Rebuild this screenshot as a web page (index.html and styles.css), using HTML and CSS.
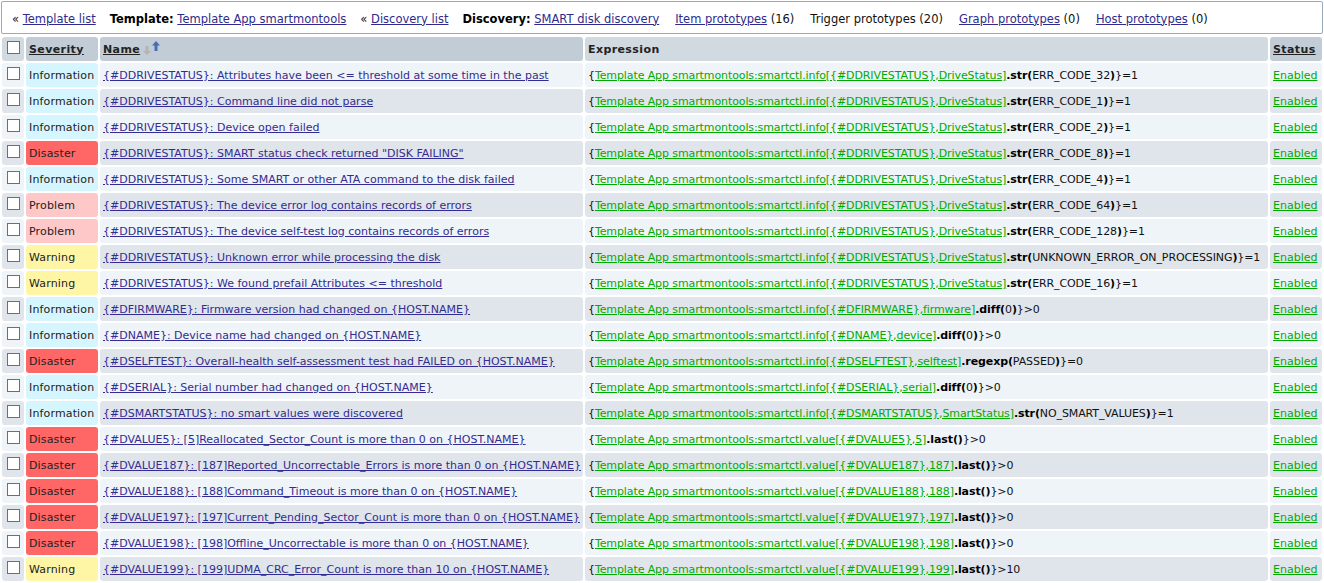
FILE: index.html
```html
<!DOCTYPE html>
<html>
<head>
<meta charset="utf-8">
<link rel="stylesheet" href="styles.css">
</head>
<body>
<div class="crumbs">
  <span class="crumb">« <a href="#">Template list</a></span>
  <span class="crumb"><b>Template:</b> <a href="#">Template App smartmontools</a></span>
  <span class="crumb">« <a href="#">Discovery list</a></span>
  <span class="crumb"><b>Discovery:</b> <a href="#">SMART disk discovery</a></span>
  <span class="crumb tab"><a href="#">Item prototypes</a> (16)</span>
  <span class="crumb tab">Trigger prototypes (20)</span>
  <span class="crumb tab"><a href="#">Graph prototypes</a> (0)</span>
  <span class="crumb tab"><a href="#">Host prototypes</a> (0)</span>
</div>
<table class="list">
  <colgroup>
    <col class="c-cb"><col class="c-sev"><col class="c-name"><col class="c-expr"><col class="c-status">
  </colgroup>
  <thead>
    <tr>
      <th class="plain"><input type="checkbox" class="cb"></th>
      <th class="sorted"><a href="#" class="hlink">Severity</a></th>
      <th class="sorted"><span class="namehead"><a href="#" class="hlink">Name</a><svg class="sorticon" width="18" height="14" viewBox="0 0 18 14"><path d="M2.5 5h3v5h2.5l-4 4-4-4h2.5z" fill="#b4b4b4"/><path d="M13 0l4 4.5h-8z" fill="#4a6db0"/><path d="M11.5 4h3v6h-3z" fill="#4a6db0"/></svg></span></th>
      <th class="plain">Expression</th>
      <th class="sorted"><a href="#" class="hlink">Status</a></th>
    </tr>
  </thead>
  <tbody>
    <tr class="odd"><td><input type="checkbox" class="cb"></td><td class="sev info">Information</td><td><a href="#" class="name">{#DDRIVESTATUS}: Attributes have been &lt;= threshold at some time in the past</a></td><td class="expr">{<a href="#" class="g">Template App smartmontools:smartctl.info[{#DDRIVESTATUS},DriveStatus]</a><b>.str(</b>ERR_CODE_32<b>)</b>}=1</td><td><a href="#" class="g">Enabled</a></td></tr>
    <tr class="even"><td><input type="checkbox" class="cb"></td><td class="sev info">Information</td><td><a href="#" class="name">{#DDRIVESTATUS}: Command line did not parse</a></td><td class="expr">{<a href="#" class="g">Template App smartmontools:smartctl.info[{#DDRIVESTATUS},DriveStatus]</a><b>.str(</b>ERR_CODE_1<b>)</b>}=1</td><td><a href="#" class="g">Enabled</a></td></tr>
    <tr class="odd"><td><input type="checkbox" class="cb"></td><td class="sev info">Information</td><td><a href="#" class="name">{#DDRIVESTATUS}: Device open failed</a></td><td class="expr">{<a href="#" class="g">Template App smartmontools:smartctl.info[{#DDRIVESTATUS},DriveStatus]</a><b>.str(</b>ERR_CODE_2<b>)</b>}=1</td><td><a href="#" class="g">Enabled</a></td></tr>
    <tr class="even"><td><input type="checkbox" class="cb"></td><td class="sev disaster">Disaster</td><td><a href="#" class="name">{#DDRIVESTATUS}: SMART status check returned "DISK FAILING"</a></td><td class="expr">{<a href="#" class="g">Template App smartmontools:smartctl.info[{#DDRIVESTATUS},DriveStatus]</a><b>.str(</b>ERR_CODE_8<b>)</b>}=1</td><td><a href="#" class="g">Enabled</a></td></tr>
    <tr class="odd"><td><input type="checkbox" class="cb"></td><td class="sev info">Information</td><td><a href="#" class="name">{#DDRIVESTATUS}: Some SMART or other ATA command to the disk failed</a></td><td class="expr">{<a href="#" class="g">Template App smartmontools:smartctl.info[{#DDRIVESTATUS},DriveStatus]</a><b>.str(</b>ERR_CODE_4<b>)</b>}=1</td><td><a href="#" class="g">Enabled</a></td></tr>
    <tr class="even"><td><input type="checkbox" class="cb"></td><td class="sev problem">Problem</td><td><a href="#" class="name">{#DDRIVESTATUS}: The device error log contains records of errors</a></td><td class="expr">{<a href="#" class="g">Template App smartmontools:smartctl.info[{#DDRIVESTATUS},DriveStatus]</a><b>.str(</b>ERR_CODE_64<b>)</b>}=1</td><td><a href="#" class="g">Enabled</a></td></tr>
    <tr class="odd"><td><input type="checkbox" class="cb"></td><td class="sev problem">Problem</td><td><a href="#" class="name">{#DDRIVESTATUS}: The device self-test log contains records of errors</a></td><td class="expr">{<a href="#" class="g">Template App smartmontools:smartctl.info[{#DDRIVESTATUS},DriveStatus]</a><b>.str(</b>ERR_CODE_128<b>)</b>}=1</td><td><a href="#" class="g">Enabled</a></td></tr>
    <tr class="even"><td><input type="checkbox" class="cb"></td><td class="sev warning">Warning</td><td><a href="#" class="name">{#DDRIVESTATUS}: Unknown error while processing the disk</a></td><td class="expr">{<a href="#" class="g">Template App smartmontools:smartctl.info[{#DDRIVESTATUS},DriveStatus]</a><b>.str(</b>UNKNOWN_ERROR_ON_PROCESSING<b>)</b>}=1</td><td><a href="#" class="g">Enabled</a></td></tr>
    <tr class="odd"><td><input type="checkbox" class="cb"></td><td class="sev warning">Warning</td><td><a href="#" class="name">{#DDRIVESTATUS}: We found prefail Attributes &lt;= threshold</a></td><td class="expr">{<a href="#" class="g">Template App smartmontools:smartctl.info[{#DDRIVESTATUS},DriveStatus]</a><b>.str(</b>ERR_CODE_16<b>)</b>}=1</td><td><a href="#" class="g">Enabled</a></td></tr>
    <tr class="even"><td><input type="checkbox" class="cb"></td><td class="sev info">Information</td><td><a href="#" class="name">{#DFIRMWARE}: Firmware version had changed on {HOST.NAME}</a></td><td class="expr">{<a href="#" class="g">Template App smartmontools:smartctl.info[{#DFIRMWARE},firmware]</a><b>.diff(</b>0<b>)</b>}&gt;0</td><td><a href="#" class="g">Enabled</a></td></tr>
    <tr class="odd"><td><input type="checkbox" class="cb"></td><td class="sev info">Information</td><td><a href="#" class="name">{#DNAME}: Device name had changed on {HOST.NAME}</a></td><td class="expr">{<a href="#" class="g">Template App smartmontools:smartctl.info[{#DNAME},device]</a><b>.diff(</b>0<b>)</b>}&gt;0</td><td><a href="#" class="g">Enabled</a></td></tr>
    <tr class="even"><td><input type="checkbox" class="cb"></td><td class="sev disaster">Disaster</td><td><a href="#" class="name">{#DSELFTEST}: Overall-health self-assessment test had FAILED on {HOST.NAME}</a></td><td class="expr">{<a href="#" class="g">Template App smartmontools:smartctl.info[{#DSELFTEST},selftest]</a><b>.regexp(</b>PASSED<b>)</b>}=0</td><td><a href="#" class="g">Enabled</a></td></tr>
    <tr class="odd"><td><input type="checkbox" class="cb"></td><td class="sev info">Information</td><td><a href="#" class="name">{#DSERIAL}: Serial number had changed on {HOST.NAME}</a></td><td class="expr">{<a href="#" class="g">Template App smartmontools:smartctl.info[{#DSERIAL},serial]</a><b>.diff(</b>0<b>)</b>}&gt;0</td><td><a href="#" class="g">Enabled</a></td></tr>
    <tr class="even"><td><input type="checkbox" class="cb"></td><td class="sev info">Information</td><td><a href="#" class="name">{#DSMARTSTATUS}: no smart values were discovered</a></td><td class="expr">{<a href="#" class="g">Template App smartmontools:smartctl.info[{#DSMARTSTATUS},SmartStatus]</a><b>.str(</b>NO_SMART_VALUES<b>)</b>}=1</td><td><a href="#" class="g">Enabled</a></td></tr>
    <tr class="odd"><td><input type="checkbox" class="cb"></td><td class="sev disaster">Disaster</td><td><a href="#" class="name">{#DVALUE5}: [5]Reallocated_Sector_Count is more than 0 on {HOST.NAME}</a></td><td class="expr">{<a href="#" class="g">Template App smartmontools:smartctl.value[{#DVALUE5},5]</a><b>.last()</b>}&gt;0</td><td><a href="#" class="g">Enabled</a></td></tr>
    <tr class="even"><td><input type="checkbox" class="cb"></td><td class="sev disaster">Disaster</td><td><a href="#" class="name">{#DVALUE187}: [187]Reported_Uncorrectable_Errors is more than 0 on {HOST.NAME}</a></td><td class="expr">{<a href="#" class="g">Template App smartmontools:smartctl.value[{#DVALUE187},187]</a><b>.last()</b>}&gt;0</td><td><a href="#" class="g">Enabled</a></td></tr>
    <tr class="odd"><td><input type="checkbox" class="cb"></td><td class="sev disaster">Disaster</td><td><a href="#" class="name">{#DVALUE188}: [188]Command_Timeout is more than 0 on {HOST.NAME}</a></td><td class="expr">{<a href="#" class="g">Template App smartmontools:smartctl.value[{#DVALUE188},188]</a><b>.last()</b>}&gt;0</td><td><a href="#" class="g">Enabled</a></td></tr>
    <tr class="even"><td><input type="checkbox" class="cb"></td><td class="sev disaster">Disaster</td><td><a href="#" class="name">{#DVALUE197}: [197]Current_Pending_Sector_Count is more than 0 on {HOST.NAME}</a></td><td class="expr">{<a href="#" class="g">Template App smartmontools:smartctl.value[{#DVALUE197},197]</a><b>.last()</b>}&gt;0</td><td><a href="#" class="g">Enabled</a></td></tr>
    <tr class="odd"><td><input type="checkbox" class="cb"></td><td class="sev disaster">Disaster</td><td><a href="#" class="name">{#DVALUE198}: [198]Offline_Uncorrectable is more than 0 on {HOST.NAME}</a></td><td class="expr">{<a href="#" class="g">Template App smartmontools:smartctl.value[{#DVALUE198},198]</a><b>.last()</b>}&gt;0</td><td><a href="#" class="g">Enabled</a></td></tr>
    <tr class="even"><td><input type="checkbox" class="cb"></td><td class="sev warning">Warning</td><td><a href="#" class="name">{#DVALUE199}: [199]UDMA_CRC_Error_Count is more than 10 on {HOST.NAME}</a></td><td class="expr">{<a href="#" class="g">Template App smartmontools:smartctl.value[{#DVALUE199},199]</a><b>.last()</b>}&gt;10</td><td><a href="#" class="g">Enabled</a></td></tr>
  </tbody>
</table>
</body>
</html>
```
FILE: styles.css
```css
html, body {
  margin: 0;
  padding: 0;
  background: #ffffff;
  font-family: "DejaVu Sans", Verdana, sans-serif;
  font-size: 11px;
  color: #111;
}

.crumbs {
  margin: 1px;
  border: 1px solid #9aaabb;
  border-radius: 2px;
  background: #fff;
  display: flex;
  align-items: center;
  gap: 14px;
  padding: 2px 0 0 10px;
  box-sizing: border-box;
  height: 33px;
  white-space: nowrap;
  font-size: 11.5px;
}
.crumbs .tab { margin-left: 2px; }
.crumbs a { color: #2f2b8c; }
.crumbs b { color: #000; }

table.list {
  width: 100%;
  table-layout: fixed;
  border-collapse: separate;
  border-spacing: 2px;
  white-space: nowrap;
}
col.c-cb { width: 22px; }
col.c-sev { width: 72px; }
col.c-name { width: 483px; }
col.c-expr { width: 683px; }
col.c-status { width: 52px; }

th, td {
  height: 24px;
  padding: 0 3px;
  border-radius: 3px;
  text-align: left;
  vertical-align: middle;
  overflow: hidden;
}
th {
  font-weight: bold;
  color: #222;
  font-size: 11px;
  letter-spacing: 0.4px;
}
th.sorted { background: #c1ccd6; }
th.plain { background: #d1d9e1; }
th:first-child, td:first-child { padding: 0; text-align: center; }

.hlink { color: #222; }
.namehead { display: inline-flex; align-items: center; gap: 3px; }
.sorticon { display: block; margin-top: -3px; }

tr.odd td { background: #eff4f8; }
tr.even td { background: #e0e5ec; }
tr td.sev { color: #222; letter-spacing: 0.15px; }
tr td.info { background: #d6f6ff; }
tr td.disaster { background: #ff6666; }
tr td.problem { background: #ffc8c8; }
tr td.warning { background: #fff6a5; }

td.expr { letter-spacing: -0.1px; }

a.name { color: #332c92; }
a.g { color: #00aa00; }
td b { color: #000; }

.cb {
  appearance: none;
  -webkit-appearance: none;
  width: 13px;
  height: 13px;
  border: 1px solid #6f6f6f;
  background: #fff;
  display: block;
  margin: 0 auto;
  position: relative;
  top: -2px;
}
```
